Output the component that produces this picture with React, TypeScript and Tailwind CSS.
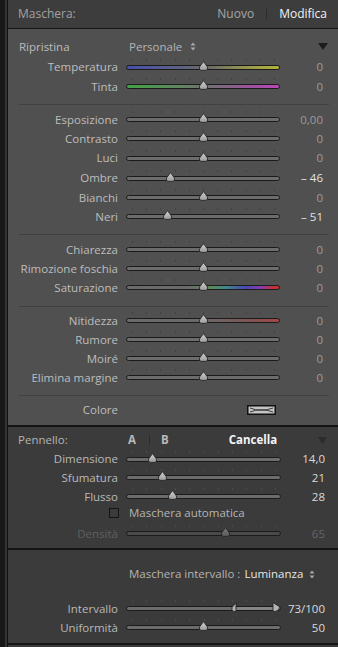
import React from "react";

const FONT = { fontFamily: '"Open Sans", "Noto Sans", sans-serif' };

type SliderProps = {
  pos: number;
  width: number;
  bg?: string;
  dim?: boolean;
  tickColor?: string;
  range?: boolean;
};

function Thumb({ x, dim }: { x: number; dim?: boolean }) {
  return (
    <svg
      width="11"
      height="10"
      viewBox="0 0 11 10"
      className="absolute top-[-4px]"
      style={{ left: x - 5.5 }}
    >
      <defs>
        <linearGradient id={dim ? "thd" : "th"} x1="0" y1="0" x2="0" y2="1">
          <stop offset="0" stopColor={dim ? "#7a7a7a" : "#d2d2d2"} />
          <stop offset="1" stopColor={dim ? "#5a5a5a" : "#9a9a9a"} />
        </linearGradient>
      </defs>
      <path
        d="M5.5 0.6 L9 5.3 Q10.2 7 9.2 8.4 Q8.6 9.4 7 9.4 L4 9.4 Q2.4 9.4 1.8 8.4 Q0.8 7 2 5.3 Z"
        fill={`url(#${dim ? "thd" : "th"})`}
        stroke="#262626"
        strokeWidth="0.9"
      />
    </svg>
  );
}

function Slider({ pos, width, bg, dim, tickColor = "#404040", range }: SliderProps) {
  const ticks = Array.from({ length: 11 }, (_, i) => 6 + i * ((width - 12) / 10));
  return (
    <div className="relative h-[5px]" style={{ width }}>
      {ticks.map((t, i) => (
        <div
          key={i}
          className="absolute top-[-6px] h-[2px] w-[1px]"
          style={{ left: Math.round(t), background: tickColor }}
        />
      ))}
      <div
        className="h-[5px] w-full rounded-full border border-[#1b1b1b]"
        style={{ background: bg ?? (dim ? "#4a4a4a" : "#6c6c6c") }}
      />
      {range ? (
        <>
          <div className="absolute left-[110px] top-[1px] h-[3px] w-[38px] bg-[#858585]" />
          <svg width="8" height="10" viewBox="0 0 8 10" className="absolute top-[-4px] left-[105px]">
            <path d="M5 0.6 L5 9.4 L3 9.4 Q1 9.4 1 7.5 L1 5.5 Z" fill="#b4b4b4" stroke="#262626" strokeWidth="0.9" />
          </svg>
          <svg width="9" height="10" viewBox="0 0 9 10" className="absolute top-[-4px] left-[146px]">
            <path d="M1 0.6 L1 9.4 L3 9.4 Q5 9.4 6.5 7.5 L8 5 Z" fill="#b4b4b4" stroke="#262626" strokeWidth="0.9" />
          </svg>
        </>
      ) : (
        <Thumb x={pos} dim={dim} />
      )}
    </div>
  );
}

type RowProps = {
  label: string;
  value: string;
  pos: number;
  h: string;
  bg?: string;
  bright?: boolean;
  lower?: boolean;
  dim?: boolean;
  range?: boolean;
};

function Row({ label, value, pos, h, bg, bright, lower, dim, range }: RowProps) {
  const labelColor = dim ? "text-[#606060]" : lower ? "text-[#b9b9b9]" : "text-[#bdbdbd]";
  const valueColor = dim
    ? "text-[#666666]"
    : lower
    ? "text-[#dadada]"
    : bright
    ? "text-[#e2e2e2]"
    : "text-[#9c9c9c]";
  return (
    <div className={`flex items-center ${h}`}>
      <div className={`w-[110px] whitespace-nowrap text-right ${labelColor}`}>{label}</div>
      <div className="ml-[8px] flex items-center">
        <Slider
          pos={pos}
          width={lower ? 155 : 154}
          bg={bg}
          dim={dim}
          tickColor={lower ? "#4a4a4a" : "#414141"}
          range={range}
        />
      </div>
      <div className={`whitespace-nowrap text-right ${lower ? "w-[44px]" : "w-[43px]"} ${valueColor}`}>{value}</div>
    </div>
  );
}

function Sep({ cls }: { cls: string }) {
  return <div className={`ml-[11px] mr-[9px] h-[1px] bg-[#414141] ${cls}`} />;
}

function UpDown() {
  return (
    <svg width="6" height="9" viewBox="0 0 6 9" className="inline-block">
      <path d="M3 0.5 L5.5 3.5 L0.5 3.5 Z" fill="#a8a8a8" />
      <path d="M3 8.5 L5.5 5.5 L0.5 5.5 Z" fill="#a8a8a8" />
    </svg>
  );
}

export default function App() {
  const temp = "linear-gradient(90deg,#4650ad 0%,#5a5f8a 30%,#6d6d66 55%,#9a9a4a 80%,#b2b23c 100%)";
  const tint = "linear-gradient(90deg,#44a044 0%,#5c8a5c 30%,#7a6a7a 60%,#a34fa3 85%,#b848b8 100%)";
  const sat = "linear-gradient(90deg,#6a6a6a 0%,#6a6a6a 40%,#5d8a5a 55%,#3f8a8a 65%,#4848b0 78%,#8a3ab0 88%,#c83030 97%)";
  const sharp = "linear-gradient(90deg,#6a6a6a 0%,#6a6a6a 50%,#7d5555 80%,#a24646 100%)";

  return (
    <div className="flex h-[647px] w-[338px] overflow-hidden bg-[#1a1a1a] text-[11.5px] leading-none" style={FONT}>
      <div className="h-full w-[5px] bg-[#181818]" />
      <div className="h-full w-[2px] bg-[#343434]" />
      <div className="h-full w-[1px] bg-[#121212]" />
      <div className="flex h-full w-[330px] flex-col">
        {/* header */}
        <div className="flex h-[28px] items-center bg-[#3d3d3d] pl-[10px] pr-[11px]">
          <span className="text-[12px] text-[#a2a2a2]">Maschera:</span>
          <div className="flex-1" />
          <span className="text-[12px] text-[#a6a6a6]">Nuovo</span>
          <div className="mx-[12px] h-[11px] w-[1px] bg-[#2c2c2c]" />
          <span className="text-[12px] text-[#f2f2f2]">Modifica</span>
        </div>
        <div className="h-[1px] bg-[#151515]" />
        {/* main panel */}
        <div className="flex flex-col bg-[#505050] pt-[7px]">
          <div className="flex h-[21px] items-center pl-[11px] pr-[10px]">
            <span className="w-[110px] text-[#bdbdbd]">Ripristina</span>
            <span className="text-[#b4b4b4]">Personale</span>
            <span className="ml-[8px] flex items-center">
              <UpDown />
            </span>
            <div className="flex-1" />
            <svg width="10" height="7" viewBox="0 0 10 7">
              <path d="M0 0 L10 0 L5 7 Z" fill="#1d1d1d" />
            </svg>
          </div>
          <Row label="Temperatura" value="0" pos={77} h="h-[20px]" bg={temp} />
          <Row label="Tinta" value="0" pos={77} h="h-[19px]" bg={tint} />
          <Sep cls="mt-[8px] mb-[5px]" />
          <Row label="Esposizione" value="0,00" pos={77} h="h-[19px]" />
          <Row label="Contrasto" value="0" pos={77} h="h-[19px]" />
          <Row label="Luci" value="0" pos={77} h="h-[20px]" />
          <Row label="Ombre" value="– 46" pos={44} h="h-[20px]" bright />
          <Row label="Bianchi" value="0" pos={77} h="h-[19px]" />
          <Row label="Neri" value="– 51" pos={41} h="h-[19px]" bright />
          <Sep cls="mt-[8px] mb-[5px]" />
          <Row label="Chiarezza" value="0" pos={77} h="h-[19px]" />
          <Row label="Rimozione foschia" value="0" pos={77} h="h-[19px]" />
          <Row label="Saturazione" value="0" pos={77} h="h-[19px]" bg={sat} />
          <Sep cls="mt-[9px] mb-[4px]" />
          <Row label="Nitidezza" value="0" pos={77} h="h-[19px]" bg={sharp} />
          <Row label="Rumore" value="0" pos={77} h="h-[19px]" />
          <Row label="Moiré" value="0" pos={77} h="h-[19px]" />
          <Row label="Elimina margine" value="0" pos={77} h="h-[19px]" />
          <Sep cls="mt-[8px] mb-[4px]" />
          <div className="flex h-[20px] items-center">
            <div className="w-[110px] text-right text-[#bdbdbd]">Colore</div>
            <div className="ml-[129px]">
              <svg width="29" height="10" viewBox="0 0 29 10" className="block">
                <rect x="0.75" y="0.75" width="27.5" height="8.5" fill="#c4c4c4" stroke="#111" strokeWidth="1.5" />
                <path d="M3 3 Q14 7.5 26 3 M3 7 Q14 2.5 26 7" stroke="#3a3a3a" strokeWidth="1" fill="none" />
              </svg>
            </div>
          </div>
          <div className="h-[5px]" />
        </div>
        <div className="h-[2px] bg-[#151515]" />
        {/* lower */}
        <div className="flex flex-1 flex-col bg-[#3b3b3b] pt-[3px]">
          <div className="flex h-[20px] items-center pl-[10px] pr-[11px]">
            <span className="w-[110px] text-[#b4b4b4]">Pennello:</span>
            <span className="font-bold text-[#b8b8b8]">A</span>
            <div className="ml-[13px] h-[10px] w-[1px] bg-[#2c2c2c]" />
            <span className="ml-[11px] font-bold text-[#b8b8b8]">B</span>
            <span className="ml-[60px] text-[11.5px] font-bold text-[#f4f4f4]">Cancella</span>
            <div className="flex-1" />
            <svg width="9" height="7" viewBox="0 0 9 7">
              <path d="M0 0 L9 0 L4.5 7 Z" fill="#2c2c2c" />
            </svg>
          </div>
          <Row label="Dimensione" value="14,0" pos={26} h="h-[18px]" lower />
          <Row label="Sfumatura" value="21" pos={36} h="h-[19px]" lower />
          <Row label="Flusso" value="28" pos={46} h="h-[19px]" lower />
          <div className="flex h-[13px] items-center">
            <div className="ml-[101px] h-[10px] w-[10px] border border-[#141414] bg-[#3b3b3b]" />
            <span className="ml-[10px] text-[#b4b4b4]">Maschera automatica</span>
          </div>
          <div className="h-[5px]" />
          <Row label="Densità" value="65" pos={99} h="h-[19px]" lower dim />
          <div className="h-[5px]" />
          <div className="h-[2px] bg-[#151515]" />
          <div className="h-[15px]" />
          <div className="flex h-[18px] items-center">
            <span className="ml-[121px] text-[#b4b4b4]">Maschera intervallo :</span>
            <span className="ml-[4px] text-[#e6e6e6]">Luminanza</span>
            <span className="ml-[6px] flex items-center">
              <UpDown />
            </span>
          </div>
          <div className="h-[16px]" />
          <Row label="Intervallo" value="73/100" pos={0} h="h-[19px]" lower range />
          <Row label="Uniformità" value="50" pos={77} h="h-[19px]" lower />
          <div className="h-[6px]" />
          <div className="h-[2px] bg-[#151515]" />
        </div>
      </div>
    </div>
  );
}
